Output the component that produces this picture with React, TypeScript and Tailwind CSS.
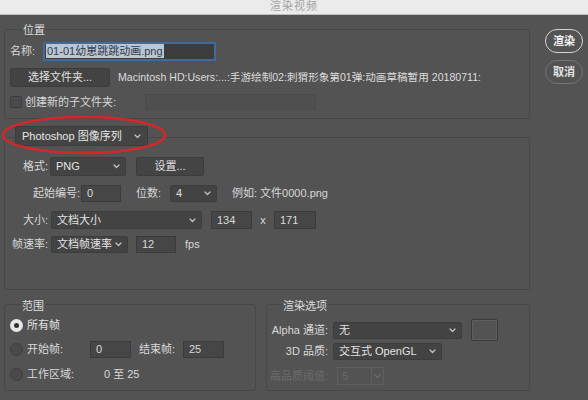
import type { ReactNode } from "react";

const FONT = { fontFamily: '"Liberation Sans", "Noto Sans CJK SC", sans-serif' };

function Chevron({ className = "" }: { className?: string }) {
  return (
    <svg width="7" height="5" viewBox="0 0 7 5" fill="none" className={className}>
      <path d="M1 1L3.5 3.5L6 1" stroke="currentColor" strokeWidth="1.2" strokeLinecap="round" strokeLinejoin="round" />
    </svg>
  );
}

function Select({ label, w, h = 17 }: { label: string; w: string; h?: number }) {
  return (
    <div
      className={`${w} flex items-center justify-between gap-[2px] bg-[#434343] border border-[#3d3d3d] rounded-[2px] pl-[5px] pr-[5px] text-[#e2e2e2] shrink-0`}
      style={{ height: h }}
    >
      <span className="whitespace-nowrap">{label}</span>
      <Chevron className="text-[#c4c4c4] shrink-0" />
    </div>
  );
}

function Field({ value, w, h = 17 }: { value: string; w: string; h?: number }) {
  return (
    <div
      className={`${w} flex items-center bg-[#464646] border border-[#3b3b3b] pl-[5px] text-[#dadada] shrink-0`}
      style={{ height: h }}
    >
      {value}
    </div>
  );
}

function Group({ legend, className, children }: { legend: ReactNode; className: string; children: ReactNode }) {
  return (
    <div className={`border border-[#474747] rounded-[3px] flex flex-col ${className}`}>
      {legend}
      {children}
    </div>
  );
}

function Radio({ checked }: { checked?: boolean }) {
  return checked ? (
    <span className="w-[13px] h-[13px] rounded-full bg-[#e6e6e6] flex items-center justify-center shrink-0">
      <span className="w-[5px] h-[5px] rounded-full bg-[#333]" />
    </span>
  ) : (
    <span className="w-[13px] h-[13px] rounded-full bg-[#4a4a4a] border border-[#3f3f3f] shrink-0" />
  );
}

export default function App() {
  return (
    <div className="w-[588px] h-[400px] bg-[#535353] overflow-hidden text-[11px] text-[#d8d8d8] relative" style={FONT}>
      {/* title bar */}
      <div className="h-[15px] bg-[#ebebeb] border-b border-[#bdbdbd] flex justify-center overflow-hidden">
        <span className="text-[11px] leading-[13px] text-[#a3a3a3] tracking-[1px]">渲染视频</span>
      </div>

      <div className="flex">
        {/* left column */}
        <div className="w-[526px] ml-[4px] flex flex-col">
          {/* 位置 */}
          <Group
            className="mt-[14px] h-[90px] pl-[5px]"
            legend={
              <span className="-mt-[7px] ml-[12px] w-fit px-[1px] bg-[#535353] leading-[14px] text-[#dcdcdc]">位置</span>
            }
          >
            <div className="flex items-center mt-[5px] h-[18px]">
              <span className="w-[33px]">名称:</span>
              <div className="w-[173px] h-[19px] bg-[#3c3c3c] border-[2px] border-[#3f6c9f] flex items-center pl-[1px]">
                <span className="bg-[#bcc6d2] text-[#2e3b4a] leading-[14px] px-[1px]">01-01幼崽跳跳动画.png</span>
              </div>
            </div>
            <div className="flex items-center mt-[8px] h-[19px]">
              <div className="w-[100px] h-[19px] bg-[#434343] border border-[#3c3c3c] rounded-[2px] flex items-center justify-center text-[#e0e0e0]">
                选择文件夹...
              </div>
              <span className="ml-[8px] whitespace-nowrap text-[#dcdcdc] text-[10.6px]">
                Macintosh HD:Users:...:手游绘制02:刺猬形象第01弹:动画草稿暂用 20180711:
              </span>
            </div>
            <div className="flex items-center mt-[7px] h-[16px]">
              <span className="w-[12px] h-[12px] bg-[#4a4a4a] border border-[#3c3c3c] rounded-[2px] shrink-0" />
              <span className="ml-[3px] w-[120px]">创建新的子文件夹:</span>
              <div className="w-[171px] h-[16px] bg-[#4f4f4f] border border-[#4a4a4a]" />
            </div>
          </Group>

          {/* 输出 */}
          <Group
            className="mt-[18px] h-[153px] pl-0"
            legend={
              <div className="-mt-[12px] ml-[10px] w-[133px] h-[20px] flex items-center justify-between bg-[#444] border border-[#3c3c3c] rounded-[2px] pl-[6px] pr-[6px] text-[#e6e6e6]">
                <span>Photoshop 图像序列</span>
                <Chevron className="text-[#c4c4c4]" />
              </div>
            }
          >
            <div className="flex items-center mt-[11px] h-[19px]">
              <span className="w-[43px] text-right">格式:</span>
              <div className="ml-[2px]">
                <Select label="PNG" w="w-[76px]" h={19} />
              </div>
              <div className="ml-[10px] w-[68px] h-[19px] bg-[#444] border border-[#3c3c3c] rounded-[2px] flex items-center justify-center text-[#e0e0e0]">
                设置...
              </div>
            </div>
            <div className="flex items-center mt-[9px] h-[17px]">
              <span className="w-[75px] text-right">起始编号:</span>
              <div className="ml-[1px]">
                <Field value="0" w="w-[40px]" />
              </div>
              <span className="ml-[15px] w-[34px]">位数:</span>
              <Select label="4" w="w-[47px]" />
              <span className="ml-[15px] whitespace-nowrap">例如: 文件0000.png</span>
            </div>
            <div className="flex items-center mt-[9px] h-[18px]">
              <span className="w-[43px] text-right">大小:</span>
              <div className="ml-[3px]">
                <Select label="文档大小" w="w-[151px]" h={18} />
              </div>
              <div className="ml-[9px]">
                <Field value="134" w="w-[41px]" h={18} />
              </div>
              <span className="w-[22px] text-center">x</span>
              <Field value="171" w="w-[42px]" h={18} />
            </div>
            <div className="flex items-center mt-[7px] h-[17px]">
              <span className="w-[43px] text-right">帧速率:</span>
              <div className="ml-[3px]">
                <Select label="文档帧速率" w="w-[77px]" />
              </div>
              <div className="ml-[8px]">
                <Field value="12" w="w-[40px]" />
              </div>
              <span className="ml-[9px]">fps</span>
            </div>
          </Group>

          {/* bottom */}
          <div className="flex gap-[10px] mt-[14px]">
            <Group
              className="w-[252px] h-[87px] pl-[5px]"
              legend={
                <span className="-mt-[6px] ml-[11px] w-fit px-[1px] bg-[#535353] leading-[14px] text-[#dcdcdc]">范围</span>
              }
            >
              <div className="flex items-center mt-[4px] h-[17px]">
                <Radio checked />
                <span className="ml-[4px] text-[#e2e2e2]">所有帧</span>
              </div>
              <div className="flex items-center mt-[7px] h-[17px]">
                <Radio />
                <span className="ml-[4px] w-[63px]">开始帧:</span>
                <Field value="0" w="w-[41px]" h={17} />
                <span className="ml-[8px] w-[44px]">结束帧:</span>
                <Field value="25" w="w-[41px]" h={17} />
              </div>
              <div className="flex items-center mt-[8px] h-[17px]">
                <Radio />
                <span className="ml-[4px] w-[77px]">工作区域:</span>
                <span>0 至 25</span>
              </div>
            </Group>

            <Group
              className="w-[264px] h-[87px]"
              legend={
                <span className="-mt-[6px] ml-[15px] w-fit px-[1px] bg-[#535353] leading-[14px] text-[#dcdcdc]">渲染选项</span>
              }
            >
              <div className="flex items-center mt-[6px] h-[22px]">
                <span className="w-[61px] text-right whitespace-nowrap">Alpha 通道:</span>
                <div className="ml-[5px]">
                  <Select label="无" w="w-[129px]" />
                </div>
                <div className="ml-[9px] w-[27px] h-[22px] border border-[#3a3a3a] rounded-[2px] bg-[#535353] shadow-[inset_0_0_0_1px_#5e5e5e]" />
              </div>
              <div className="flex items-center mt-[2px] h-[17px]">
                <span className="w-[61px] text-right whitespace-nowrap">3D 品质:</span>
                <div className="ml-[5px]">
                  <Select label="交互式 OpenGL" w="w-[109px]" />
                </div>
              </div>
              <div className="flex items-center mt-[7px] h-[18px] text-[#6c6c6c]">
                <span className="w-[61px] text-right whitespace-nowrap">高品质阈值:</span>
                <div className="ml-[9px] w-[47px] h-[18px] border border-[#5f5f5f] flex items-center">
                  <span className="flex-1 pl-[4px]">5</span>
                  <span className="w-[12px] h-full border-l border-[#5f5f5f] flex items-center justify-center">
                    <Chevron className="text-[#6c6c6c]" />
                  </span>
                </div>
              </div>
            </Group>
          </div>
        </div>

        {/* right column */}
        <div className="ml-[15px] mt-[14px] flex flex-col gap-[7px]">
          <div className="w-[38px] h-[24px] rounded-full border-[1.5px] border-[#d4d4d4] flex items-center justify-center text-[#f0f0f0] text-[11px] font-bold">
            渲染
          </div>
          <div className="w-[38px] h-[24px] rounded-full border border-[#767676] flex items-center justify-center text-[#e4e4e4] text-[11px] font-bold">
            取消
          </div>
        </div>
      </div>

      {/* red annotation */}
      <svg className="absolute left-0 top-[114px] pointer-events-none" width="170" height="44" viewBox="0 0 170 44">
        <ellipse cx="84" cy="21" rx="81" ry="18" fill="none" stroke="#d5272a" strokeWidth="2.5" />
      </svg>
    </div>
  );
}
